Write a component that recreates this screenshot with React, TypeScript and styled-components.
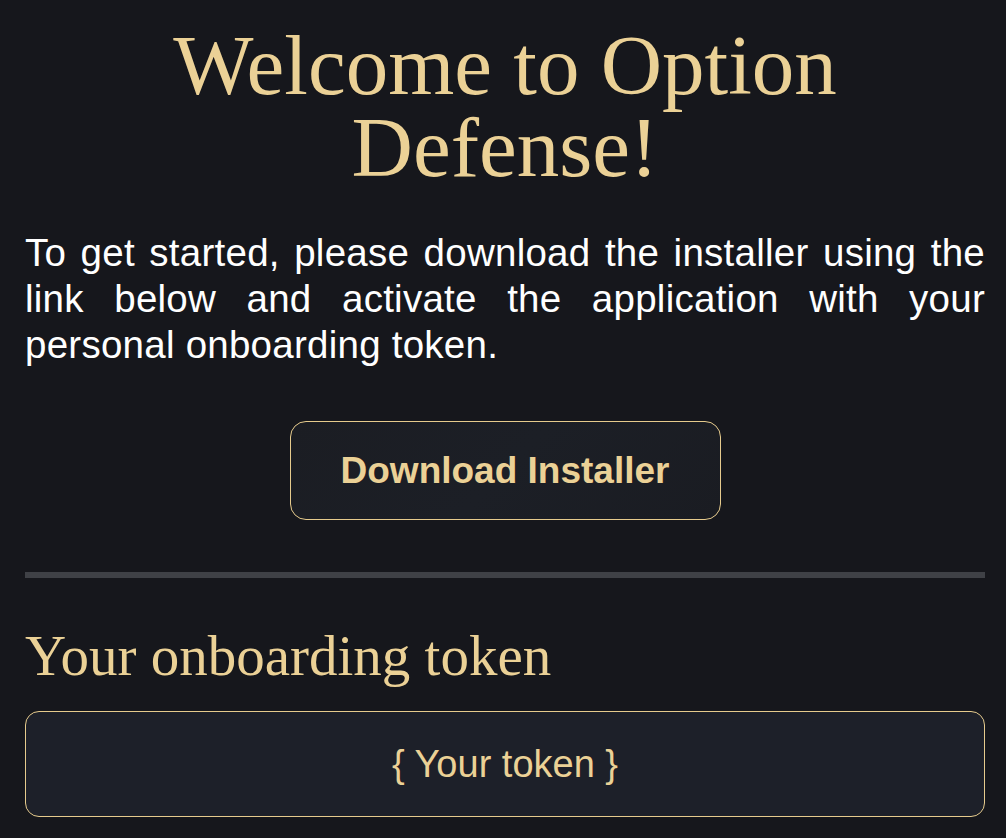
import React from "react";
import styled, { createGlobalStyle } from "styled-components";

const Global = createGlobalStyle`
  html, body { margin: 0; padding: 0; background: #16171c; }
  * { box-sizing: border-box; }
`;

const Page = styled.main`
  min-height: 838px;
  padding: 24px 21px 20px 25px;
  display: flex;
  flex-direction: column;
  font-family: "Liberation Sans", Arial, sans-serif;
`;

const Title = styled.h1`
  margin: 0;
  text-align: center;
  font-family: "Liberation Serif", "Times New Roman", serif;
  font-weight: 400;
  font-size: 85px;
  line-height: 82px;
  color: #ebd196;
`;

const Intro = styled.p`
  margin: 42px 0 0;
  font-size: 38.5px;
  letter-spacing: 0.25px;
  line-height: 46px;
  color: #ffffff;
  text-align: justify;
`;

const ButtonRow = styled.div`
  display: flex;
  justify-content: center;
  margin-top: 53px;
`;

const DownloadButton = styled.button`
  width: 431px;
  height: 99px;
  padding: 0;
  border: 1px solid #e6cb8d;
  border-radius: 16px;
  background: linear-gradient(135deg, #1b1d23, #1c1f26 50%, #1a1c22);
  color: #ebd196;
  font-family: "Liberation Sans", Arial, sans-serif;
  font-weight: 700;
  font-size: 37px;
  cursor: pointer;
`;

const Divider = styled.hr`
  margin: 52px 0 0;
  border: none;
  height: 6px;
  background: #3f4146;
`;

const Subtitle = styled.h2`
  margin: 46px 0 0;
  font-family: "Liberation Serif", "Times New Roman", serif;
  font-weight: 400;
  font-size: 57px;
  line-height: 64px;
  color: #ebd196;
`;

const TokenBox = styled.div`
  margin-top: 23px;
  height: 106px;
  border: 1px solid #e6cb8d;
  border-radius: 14px;
  background: #1d2029;
  display: flex;
  align-items: center;
  justify-content: center;
  color: #ebd196;
  font-size: 38px;
`;

export default function App() {
  return (
    <>
      <Global />
      <Page>
        <Title>Welcome to Option Defense!</Title>
        <Intro>
          To get started, please download the installer using the link below
          and activate the application with your personal onboarding token.
        </Intro>
        <ButtonRow>
          <DownloadButton>Download Installer</DownloadButton>
        </ButtonRow>
        <Divider />
        <Subtitle>Your onboarding token</Subtitle>
        <TokenBox>{"{ Your token }"}</TokenBox>
      </Page>
    </>
  );
}
